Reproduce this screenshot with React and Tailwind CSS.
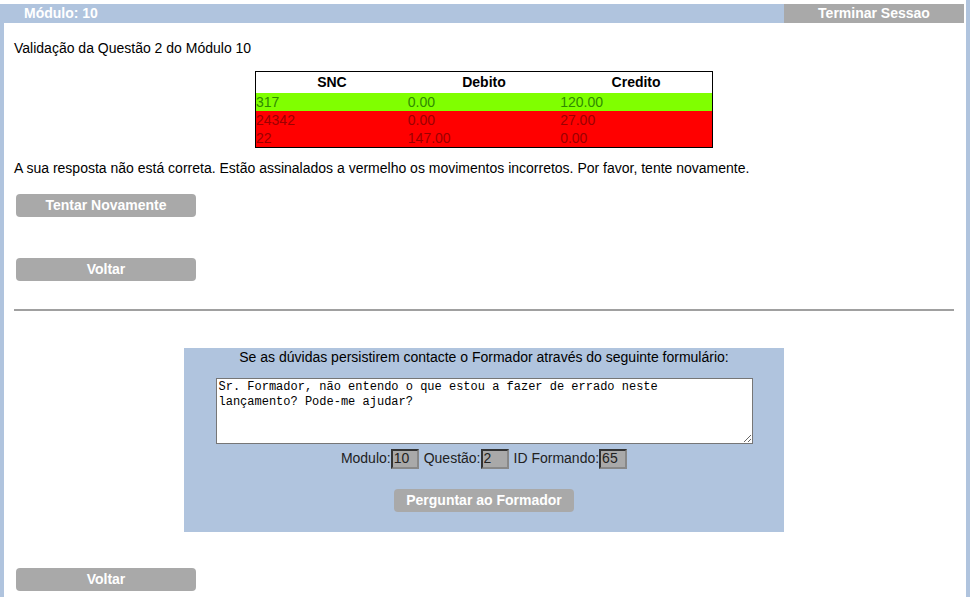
import React from 'react'

const rows = [
  { snc: '317', debito: '0.00', credito: '120.00', ok: true },
  { snc: '24342', debito: '0.00', credito: '27.00', ok: false },
  { snc: '22', debito: '147.00', credito: '0.00', ok: false },
]

const GrayButton = ({ children, className = '' }) => (
  <button
    className={`h-[23px] w-[180px] rounded-[4px] bg-[#a9a9a9] text-[14px] font-bold text-white ${className}`}
  >
    {children}
  </button>
)

const App = () => {
  return (
    <div className="flex min-h-[597px] bg-white font-['Liberation_Sans',Arial,sans-serif] text-[14px] text-black">
      <div className="flex flex-1 flex-col pt-[4px]">
        {/* Header */}
        <div className="flex h-[19px] items-center bg-[#b0c4de]">
          <span className="pl-[24px] text-[14px] font-bold text-white">Módulo: 10</span>
          <div className="ml-auto flex h-full w-[180px] items-center justify-center bg-[#a9a9a9] text-[14px] font-bold text-white">
            Terminar Sessao
          </div>
        </div>

        {/* Body */}
        <div className="flex-1 border-l-[4px] border-[#b0c4de] pl-[10px] pr-[10px]">
          <p className="mt-[17px] leading-[16px]">Validação da Questão 2 do Módulo 10</p>

          <div className="mt-[15px] flex justify-center">
            <table className="w-[458px] border border-black">
              <thead>
                <tr className="h-[18px] bg-white">
                  <th className="w-1/3 text-center font-bold">SNC</th>
                  <th className="w-1/3 text-center font-bold">Debito</th>
                  <th className="w-1/3 text-center font-bold">Credito</th>
                </tr>
              </thead>
              <tbody>
                {rows.map((r) => (
                  <tr
                    key={r.snc}
                    className={
                      r.ok
                        ? 'h-[18px] bg-[#80ff00] text-[#2f8a00]'
                        : 'h-[18px] bg-[#ff0000] text-[#9c0000]'
                    }
                  >
                    <td className="p-0 text-left leading-[18px]">{r.snc}</td>
                    <td className="p-0 text-left leading-[18px]">{r.debito}</td>
                    <td className="p-0 text-left leading-[18px]">{r.credito}</td>
                  </tr>
                ))}
              </tbody>
            </table>
          </div>

          <p className="mt-[12px] leading-[16px]">
            A sua resposta não está correta. Estão assinalados a vermelho os movimentos incorretos. Por favor, tente
            novamente.
          </p>

          <div className="mt-[18px] pl-[2px]">
            <GrayButton>Tentar Novamente</GrayButton>
          </div>
          <div className="mt-[41px] pl-[2px]">
            <GrayButton>Voltar</GrayButton>
          </div>

          <hr className="mt-[28px] border-t-[2px] border-[#a0a0a0]" />

          {/* Formulário */}
          <div className="mx-auto mt-[37px] flex w-[600px] flex-col items-center bg-[#b0c4de] pb-[20px] pt-[1px]">
            <p className="leading-[16px]">Se as dúvidas persistirem contacte o Formador através do seguinte formulário:</p>
            <textarea
              className="mt-[13px] h-[66px] w-[537px] resize border border-[#767676] bg-white py-[1px] pl-[2px] pr-[20px] font-['Liberation_Mono','DejaVu_Sans_Mono',monospace] text-[12px] leading-[15px] text-black"
              defaultValue="Sr. Formador, não entendo o que estou a fazer de errado neste lançamento? Pode-me ajudar?"
            />
            <div className="mt-[4px] flex items-center text-[14px] text-[#222]">
              <span>Modulo:</span>
              <input
                readOnly
                value="10"
                className="h-[20px] w-[28px] border-2 border-t-[#333] border-l-[#333] border-r-[#888] border-b-[#888] bg-[#a9a9a9] px-[1px] text-[14px] text-[#222]"
              />
              <span className="ml-[5px]">Questão:</span>
              <input
                readOnly
                value="2"
                className="h-[20px] w-[28px] border-2 border-t-[#333] border-l-[#333] border-r-[#888] border-b-[#888] bg-[#a9a9a9] px-[1px] text-[14px] text-[#222]"
              />
              <span className="ml-[5px]">ID Formando:</span>
              <input
                readOnly
                value="65"
                className="h-[20px] w-[28px] border-2 border-t-[#333] border-l-[#333] border-r-[#888] border-b-[#888] bg-[#a9a9a9] px-[1px] text-[14px] text-[#222]"
              />
            </div>
            <GrayButton className="mt-[20px]">Perguntar ao Formador</GrayButton>
          </div>

          <div className="mt-[36px] pl-[2px]">
            <GrayButton>Voltar</GrayButton>
          </div>
        </div>
      </div>
      <div className="ml-[2px] w-[4px] bg-[#b0c4de]" />
    </div>
  )
}

export default App
